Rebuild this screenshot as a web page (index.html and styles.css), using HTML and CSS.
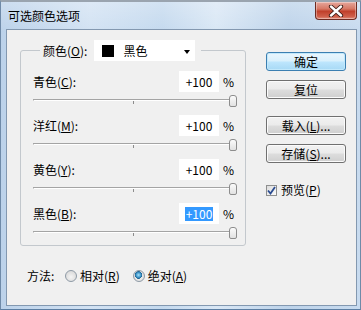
FILE: index.html
```
<!DOCTYPE html>
<html lang="zh-CN">
<head>
<meta charset="utf-8">
<title>可选颜色选项</title>
<link rel="stylesheet" href="styles.css">
</head>
<body>
<div class="window">
  <div class="titlebar">
    <span class="title">可选颜色选项</span>
    <div class="close">
      <svg width="16" height="12" viewBox="0 0 16 12">
        <path d="M3 1.5 L13 10.5 M13 1.5 L3 10.5" stroke="#3a1a14" stroke-width="4.2" stroke-linecap="round"/>
        <path d="M3 1.5 L13 10.5 M13 1.5 L3 10.5" stroke="#ffffff" stroke-width="2.4" stroke-linecap="round"/>
      </svg>
    </div>
  </div>
  <div class="client">
    <div class="left">
      <fieldset class="group">
        <legend class="legend">
          <span class="lbl">颜色(<u>O</u>):</span>
          <div class="select">
            <span class="swatch"></span>
            <span class="sel-text">黑色</span>
            <span class="arrow"></span>
          </div>
        </legend>
        <div class="adj">
          <div class="row"><span class="lbl">青色(<u>C</u>):</span><span class="num">+100</span><span class="pct">%</span></div>
          <div class="slider"><div class="track"></div><div class="tick"></div><div class="thumb"></div></div>
        </div>
        <div class="adj">
          <div class="row"><span class="lbl">洋红(<u>M</u>):</span><span class="num">+100</span><span class="pct">%</span></div>
          <div class="slider"><div class="track"></div><div class="tick"></div><div class="thumb"></div></div>
        </div>
        <div class="adj">
          <div class="row"><span class="lbl">黄色(<u>Y</u>):</span><span class="num">+100</span><span class="pct">%</span></div>
          <div class="slider"><div class="track"></div><div class="tick"></div><div class="thumb"></div></div>
        </div>
        <div class="adj last">
          <div class="row"><span class="lbl">黑色(<u>B</u>):</span><span class="num"><span class="hl">+100</span></span><span class="pct">%</span></div>
          <div class="slider"><div class="track"></div><div class="tick"></div><div class="thumb"></div></div>
        </div>
      </fieldset>
      <div class="method">
        <span class="m-lbl">方法:</span>
        <span class="radio"></span><span class="r-lbl">相对(<u>R</u>)</span>
        <span class="radio on"></span><span class="r-lbl">绝对(<u>A</u>)</span>
      </div>
    </div>
    <div class="right">
      <div class="btn default">确定</div>
      <div class="btn">复位</div>
      <div class="btn gap">载入(<u>L</u>)...</div>
      <div class="btn">存储(<u>S</u>)...</div>
      <div class="check-row">
        <span class="check">
          <svg width="9" height="9" viewBox="0 0 9 9"><path d="M1 4.5 L3.5 7.5 L8 1" fill="none" stroke="#2b4c91" stroke-width="1.8"/></svg>
        </span>
        <span class="c-lbl">预览(<u>P</u>)</span>
      </div>
    </div>
  </div>
</div>
</body>
</html>
```
FILE: styles.css
```
* { box-sizing: border-box; }
html, body { margin: 0; padding: 0; }
body {
  width: 361px;
  height: 310px;
  overflow: hidden;
  font-family: "Noto Sans CJK SC", sans-serif;
  font-size: 12px;
  color: #000;
}
u { text-decoration: underline; text-underline-offset: 1px; }

.window {
  width: 361px;
  height: 310px;
  display: flex;
  flex-direction: column;
  background:
    linear-gradient(to bottom, rgba(255,255,255,0.25), rgba(255,255,255,0) 30px),
    linear-gradient(to right, #bcd2ea 0%, #d2e2f3 25%, #c4d9ee 45%, #d9e7f5 60%, #bdd3ea 80%, #c8dbef 100%);
  border-top: 2px solid #9aa4af;
  border-left: 1px solid #6f8aa8;
  border-right: 1px solid #6f8aa8;
  border-bottom: 1px solid #5c7ea3;
}

.titlebar {
  height: 27px;
  display: flex;
  align-items: center;
  justify-content: space-between;
  flex-shrink: 0;
}
.title {
  padding-left: 7px;
  line-height: 16px;
  font-size: 12px;
  color: #000;
  margin-top: 1px;
}
.close {
  align-self: flex-start;
  width: 42px;
  height: 18px;
  margin-right: 3px;
  border: 1px solid #6d2b22;
  border-top: none;
  border-radius: 0 0 4px 4px;
  background: linear-gradient(to bottom, #e5a79c 0%, #d77865 40%, #c0402b 55%, #cf5f4a 85%, #e08f7e 100%);
  box-shadow: inset 0 0 0 1px rgba(255,255,255,0.35);
  display: flex;
  align-items: center;
  justify-content: center;
}

.client {
  flex: 1;
  margin: 0 3px 3px 5px;
  border: 1px solid #8398b0;
  background: #f0f0f0;
  display: flex;
  padding: 10px 10px 0 13px;
}

.left {
  width: 226px;
  display: flex;
  flex-direction: column;
}

.group {
  width: 226px;
  margin: 0;
  padding: 10px 8px 4px 12px;
  border: 1px solid #c3c8cd;
  border-radius: 3px;
  min-width: 0;
}
.legend {
  display: flex;
  align-items: center;
  height: 21px;
  margin-left: 7px;
  padding: 0 6px 0 3px;
}
.legend .lbl { line-height: 16px; }
.select {
  margin-left: 7px;
  width: 101px;
  height: 21px;
  background: #fff;
  display: flex;
  align-items: center;
  padding-left: 8px;
  position: relative;
}
.swatch {
  width: 12px;
  height: 12px;
  background: #000;
}
.sel-text {
  margin-left: 9px;
  line-height: 16px;
}
.arrow {
  margin-left: auto;
  margin-right: 5px;
  width: 0;
  height: 0;
  border-left: 3.5px solid transparent;
  border-right: 3.5px solid transparent;
  border-top: 4px solid #000;
  margin-top: 2px;
}

.adj { margin-bottom: 6px; }
.adj.last { margin-bottom: 0; }
.row {
  height: 21px;
  display: flex;
  align-items: center;
}
.row .lbl {
  flex: 1;
  line-height: 16px;
  padding-top: 1px;
}
.num {
  width: 40px;
  height: 21px;
  background: #fff;
  display: flex;
  align-items: center;
  justify-content: center;
  line-height: 14px;
  padding-top: 1px;
}
.hl {
  background: #3399ff;
  color: #fff;
  padding: 0 1px;
}
.pct {
  width: 14px;
  margin-left: 4px;
  line-height: 16px;
}

.slider {
  height: 17px;
  position: relative;
}
.track {
  position: absolute;
  left: 0;
  right: 4px;
  top: 7px;
  height: 2px;
  border-top: 1px solid #a4a4a4;
  border-bottom: 1px solid #ffffff;
  border-left: 1px solid #a4a4a4;
}
.tick {
  position: absolute;
  left: 100px;
  top: 9px;
  width: 1px;
  height: 3px;
  background: #8c8c8c;
}
.thumb {
  position: absolute;
  right: 0;
  top: 3px;
  width: 8px;
  height: 12px;
  border: 1px solid #8d8d8d;
  border-radius: 3px 3px 2px 2px;
  background: linear-gradient(to bottom, #fbfbfb, #e2e2e2);
}

.method {
  margin-top: 22px;
  height: 16px;
  display: flex;
  align-items: center;
  padding-left: 7px;
}
.m-lbl { line-height: 16px; width: 28px; }
.radio {
  width: 12px;
  height: 12px;
  margin-left: 10px;
  border-radius: 50%;
  border: 1px solid #8e9aa6;
  background: radial-gradient(circle at 50% 60%, #f4f4f4 0%, #dcdcdc 70%, #cfcfcf 100%);
  position: relative;
}
.radio + .r-lbl { margin-left: 3px; line-height: 16px; }
.r-lbl + .radio { margin-left: 13px; }
.radio.on {
  background:
    radial-gradient(circle at 45% 40%, #a9e3fb 0%, #3c94c8 30%, #1b5f8e 44%, transparent 48%),
    radial-gradient(circle at 50% 60%, #f4f4f4 0%, #dcdcdc 70%, #cfcfcf 100%);
}

.right {
  width: 80px;
  margin-left: 20px;
  padding-top: 12px;
  display: flex;
  flex-direction: column;
}
.btn {
  width: 80px;
  height: 19px;
  margin-bottom: 9px;
  border: 1px solid #707070;
  border-radius: 3px;
  background: linear-gradient(to bottom, #f2f2f2 0%, #ebebeb 48%, #dddddd 52%, #cfcfcf 100%);
  box-shadow: inset 0 0 0 1px #fbfbfb;
  display: flex;
  align-items: center;
  justify-content: center;
  line-height: 14px;
  padding-top: 1px;
}
.btn.default {
  border-color: #3c7fb1;
  background: linear-gradient(to bottom, #eaf6fd 0%, #d9f0fc 48%, #bee6fd 52%, #a7d9f5 100%);
  box-shadow: inset 0 0 0 1px #c2e8fb;
}
.btn.gap { margin-top: 8px; }

.check-row {
  margin-top: 11px;
  display: flex;
  align-items: center;
  height: 14px;
}
.check {
  width: 11px;
  height: 11px;
  border: 1px solid #8e8f8f;
  background: linear-gradient(135deg, #dcdcdc, #fbfbfb);
  display: flex;
  align-items: center;
  justify-content: center;
}
.c-lbl {
  margin-left: 4px;
  line-height: 16px;
}
```
